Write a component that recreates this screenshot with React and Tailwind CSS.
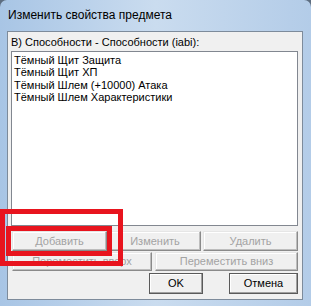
import React from "react";

const sans = { fontFamily: '"Liberation Sans", Arial, sans-serif' };

function WinButton({ children, disabled, className = "" }) {
  return (
    <div
      className={
        "flex items-center justify-center text-[11px] leading-none border " +
        (disabled
          ? "bg-[#f0f0f0] text-[#a3a3a3] border-t-[#e6e6e6] border-l-[#e6e6e6] border-r-[#8a8a8a] border-b-[#8a8a8a] shadow-[inset_-1px_-1px_0_#bdbdbd,inset_1px_1px_0_#ffffff] "
          : "bg-[#f0f0f0] text-black border-[#5a5a5a] shadow-[inset_-1px_-1px_0_#a0a0a0,inset_1px_1px_0_#ffffff] ") +
        className
      }
    >
      {children}
    </div>
  );
}

export default function App() {
  const items = [
    "Тёмный Щит Защита",
    "Тёмный Щит ХП",
    "Тёмный Шлем (+10000) Атака",
    "Тёмный Шлем Характеристики",
  ];

  return (
    <div className="w-[311px] h-[306px] bg-[#5d6d80] overflow-hidden" style={sans}>
      <div className="relative w-full h-full flex flex-col rounded-t-[7px] bg-gradient-to-r from-[#a8c5e5] via-[#cadcef] to-[#b3cce8] pl-[7px] pr-[8px] pb-[6px]">
        {/* title bar */}
        <div className="h-[31px] flex items-center pl-[1px] pb-[2px] text-[12px] text-black">
          Изменить свойства предмета
        </div>

        {/* client area */}
        <div className="flex-1 flex flex-col bg-[#f0f0f0] border border-[#7d8b9b]">
          <div className="pl-[3px] pt-[3px] h-[17px] text-[11px] leading-[14px] text-black">
            В) Способности - Способности (iabi):
          </div>

          <div className="ml-[3px] mr-[4px] mt-[2px] h-[175px] bg-white border border-[#828790] pl-[2px] pt-[2px] text-[11px] leading-[12.4px] text-black">
            {items.map((t) => (
              <div key={t}>{t}</div>
            ))}
          </div>

          <div className="ml-[4px] mr-[4px] mt-[5px] h-[20px] flex gap-[2px]">
            <WinButton disabled className="w-[95px]">Добавить</WinButton>
            <WinButton disabled className="flex-1">Изменить</WinButton>
            <WinButton disabled className="w-[95px]">Удалить</WinButton>
          </div>

          <div className="ml-[4px] mr-[4px] mt-[1px] h-[19px] flex gap-[3px]">
            <WinButton disabled className="w-[140px]">Переместить вверх</WinButton>
            <WinButton disabled className="flex-1">Переместить вниз</WinButton>
          </div>

          <div className="mr-[4px] mt-[2px] h-[21px] flex justify-end gap-[26px]">
            <WinButton className="w-[54px]">OK</WinButton>
            <WinButton className="w-[69px]">Отмена</WinButton>
          </div>
        </div>

        {/* red highlight marks */}
        <div className="absolute left-0 top-[209px] w-[123px] h-[57px] border-[5px] border-[#e8141e]" />
        <div className="absolute left-[6px] top-[226px] w-[106px] h-[30px] border-[5px] border-[#e8141e]" />
      </div>
    </div>
  );
}
